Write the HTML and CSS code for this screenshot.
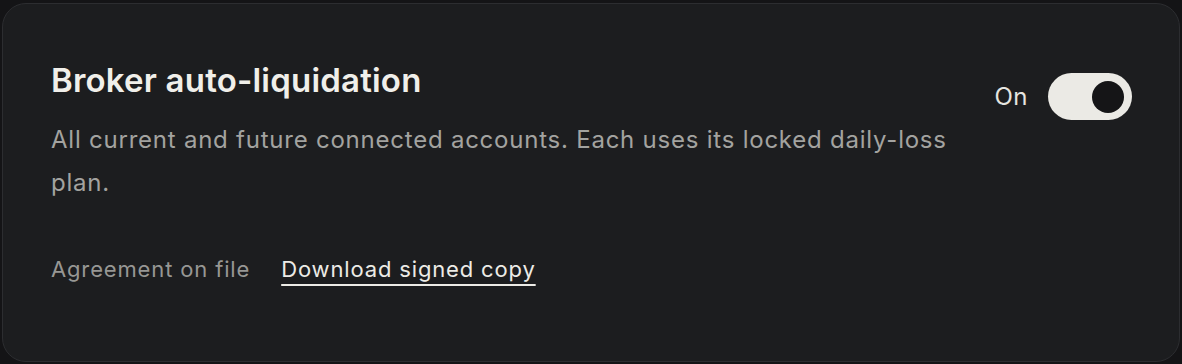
FILE: index.html
```html
<!DOCTYPE html>
<html lang="en">
<head>
  <meta charset="UTF-8">
  <meta name="viewport" content="width=device-width, initial-scale=1.0">
  <title>Broker auto-liquidation</title>
  <link rel="stylesheet" href="styles.css">
</head>
<body>
  <section class="card">
    <div class="card-head">
      <div class="card-text">
        <h2 class="title">Broker auto-liquidation</h2>
        <p class="desc">All current and future connected accounts. Each uses its locked daily-loss plan.</p>
      </div>
      <label class="switch-wrap">
        <span class="switch-label">On</span>
        <span class="switch on"><span class="knob"></span></span>
      </label>
    </div>
    <div class="agreement">
      <span class="muted">Agreement on file</span>
      <a class="link" href="#">Download signed copy</a>
    </div>
  </section>
</body>
</html>
```

FILE: styles.css
```css
body {
  margin: 0;
  background: #141416;
  font-family: Inter, "Noto Sans", sans-serif;
  color: #ecebe6;
  padding: 3px 2px 2px 2px;
  height: 364px;
  box-sizing: border-box;
}
.card {
  background: #1c1d1f;
  border: 1px solid #2c2d30;
  border-radius: 24px;
  height: 359px;
  box-sizing: border-box;
  padding: 56px 47px 0 48px;
}
.card-head {
  display: flex;
  justify-content: space-between;
  align-items: flex-start;
}
.card-text {
  max-width: 910px;
}
.title {
  margin: 0;
  font-size: 33px;
  font-weight: 600;
  line-height: 40px;
  letter-spacing: 0.2px;
  color: #f0efea;
}
.desc {
  margin: 18px 0 0 0;
  font-size: 24px;
  line-height: 43px;
  letter-spacing: 0.77px;
  color: #a3a3a0;
}
.switch-wrap {
  display: flex;
  align-items: center;
  gap: 20px;
  margin-top: 13px;
}
.switch-label {
  font-size: 24px;
  letter-spacing: 0.5px;
  color: #e6e5e0;
}
.switch {
  width: 84px;
  height: 47px;
  border-radius: 24px;
  background: #ebeae5;
  position: relative;
}
.switch .knob {
  position: absolute;
  top: 8px;
  right: 8px;
  width: 32px;
  height: 32px;
  border-radius: 50%;
  background: #151517;
}
.agreement {
  display: flex;
  gap: 31px;
  margin-top: 52px;
  font-size: 22px;
  letter-spacing: 0.85px;
}
.muted {
  color: #979794;
}
.link {
  color: #ecebe6;
  text-decoration: underline;
  text-underline-offset: 7px;
  text-decoration-thickness: 2px;
}
```
